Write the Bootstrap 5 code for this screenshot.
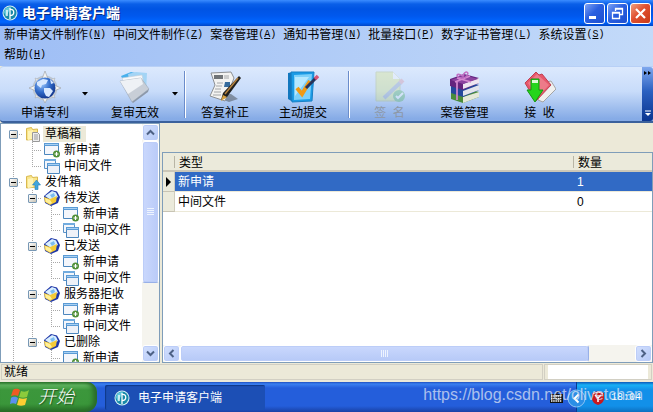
<!DOCTYPE html>
<html lang="zh-CN">
<head>
<meta charset="utf-8">
<meta name="viewport" content="width=device-width, initial-scale=1">
<title>电子申请客户端</title>
<link href="https://cdn.jsdelivr.net/npm/bootstrap@5.3.0/dist/css/bootstrap.min.css" rel="stylesheet">
<style>
body{font:12px/16px "Liberation Sans","Noto Sans CJK SC",sans-serif;color:#000;background:#ece9d8}
button{font:inherit;color:inherit;border:0;background:none;padding:0}
svg{display:block;flex:none}
.caption-bar{height:26px;background:linear-gradient(#3b8cff 0,#0a5fe8 4px,#0054e3 9px,#0058ee 16px,#0066ff 22px,#0046c8 26px);padding:0 2px}
.caption-text{font-size:14px;color:#fff;text-shadow:1px 1px #0a2a80}
.win-set{gap:2px}
.win-btn{width:21px;height:21px;border:1px solid #fff;border-radius:3px;background:linear-gradient(135deg,#7da2f5,#2a5fe0 45%,#1d4fd0)}
.win-close{background:linear-gradient(135deg,#f0a080,#e05030 45%,#c83a18)}
.menu-strip{padding:0 4px;column-gap:7px;background:linear-gradient(90deg,#9ebef5,#c3daf9)}
.menu-strip button{line-height:18px;height:20px;padding-bottom:2px;display:flex;white-space:nowrap}
.menu-strip span{font-family:"Liberation Mono",monospace;font-size:10px}
.tool-strip{height:57px;background:linear-gradient(#dce9fd,#c8dcfa 45%,#86abe6 96%);border-bottom:2px solid #3b619c;border-top:1px solid #b8d0f6;border-radius:4px 0 0 4px}
.tool-btn{width:74px;display:flex;flex-direction:column;align-items:center;padding-top:4px;gap:2px}
.tool-wide{width:75px}
.tool-btn:disabled{color:#8d97a5}
.tool-btn:disabled svg{opacity:.3}
.drop-btn{width:8px}
.tool-sep{width:2px;background:#6a8ccb;border-right:1px solid #fff;margin:4px 2px 3px 4px}
.more-btn{width:11px;background:linear-gradient(#7fa8ee,#2a60c0 45%,#0a3590);border-radius:0 3px 3px 0}
.tree-pane{width:160px;border:1px solid #7f9db9;background:#fff}
.tree-list{padding:2px 0 0 3px}
.node{height:16px;display:flex;white-space:nowrap}
.guide{width:19px;flex:none;display:flex;align-items:center;justify-content:center}
.ln,.elbow,.tee,.tip{background-repeat:no-repeat;--v:repeating-linear-gradient(#a8a8a8 0 1px,transparent 1px 2px);--h:repeating-linear-gradient(90deg,#a8a8a8 0 1px,transparent 1px 2px)}
.ln{background-image:var(--v);background-size:1px 100%;background-position:9px 0}
.tee{background-image:var(--v),var(--h);background-size:1px 100%,10px 1px;background-position:9px 0,9px 8px}
.elbow{background-image:var(--v),var(--h);background-size:1px 8px,10px 1px;background-position:9px 0,9px 8px}
.tip{background-image:var(--v),var(--h);background-size:1px 8px,10px 1px;background-position:9px 8px,9px 8px}
.fold{width:9px;height:9px;border:1px solid #7898b5;border-radius:1px;background:linear-gradient(135deg,#fff,#c9c3b4);display:flex;align-items:center;justify-content:center}
.fold::before{content:"";width:5px;height:1px;background:#000}
.cap{padding:0 2px;margin-left:1px}
.picked{background:#ece9d8;padding-right:5px}
.sb{background:#f5f4ee}
.sb-v{width:17px}
.sb-h{height:17px}
.sb-btn,.thumb{border:1px solid #fff;border-radius:3px;background:linear-gradient(135deg,#d3e0fe,#b5c9f7);box-shadow:inset 0 0 0 1px #bccdf8;display:flex;align-items:center;justify-content:center}
.sb-btn{width:17px;height:17px;flex:none}
.sb-v .thumb{height:142px;background:linear-gradient(90deg,#cad8fd,#bacbf8);border-bottom-color:#98b0e8}
.sb-h .thumb{background:linear-gradient(#cad8fd,#b6c9f7);border-right-color:#98b0e8;width:90%}
.grid-pane{border:1px solid #7f9db9;background:#fff;margin:29px 0 0 2px}
.grid-tab{width:100%;table-layout:fixed;border-collapse:separate;border-spacing:0}
.grid-tab th,.grid-tab td{height:20px;padding:0 3px;line-height:18px;border-bottom:1px solid #ece9d8;font-weight:400}
.grid-tab thead th{height:19px;background:#ebeadb;border-bottom:2px solid #cbc7b8;padding-left:4px;vertical-align:middle}
.head-cell{line-height:14px;height:12px}
.grid-tab tbody th{background:#ebeadb;border-right:1px solid #d0ccbc;border-bottom-color:#c8c4b4;padding:0 0 0 3px}
.split{border-right:1px solid #b8b5a5}
.active-row td{background:#316ac5;color:#fff}
.w-mark{width:12px}
.w-num{width:78px}
.status-strip{height:19px;border-bottom:2px solid #ece9d8;padding:1px 1px 0}
.status-cell{border:1px solid #d2cfc3;padding:0 2px}
.status-blank{width:108px;border:1px solid #d2cfc3;margin-left:1px;padding:0 3px}
.task-strip{height:30px;color:#fff;background:linear-gradient(#1f4fc0 0,#3a80f0 2px,#245edb 6px,#245edb 24px,#1941a5 30px)}
.start-btn{width:97px;padding-left:10px;font-size:18px;font-style:italic;font-weight:300;border-radius:0 10px 12px 0;background:linear-gradient(#2d7a2d 0,#5fb55f 3px,#3c973c 8px,#3a963a 22px,#256a25 30px);box-shadow:inset -4px 0 4px #2a6c2a;text-shadow:1px 1px 1px #1f4f1f}
.task-btn{width:160px;height:25px;padding:1px 0 0 9px;border-radius:2px;background:#1c4fb5;box-shadow:inset 1px 1px 1px #0f3888}
.kbd-ico{margin-right:12px}
.tray-strip{width:77px;background:linear-gradient(#0c59b9 0,#18b0f5 3px,#1290e9 8px,#1290e9 24px,#0d70c0 30px);border-left:1px solid #0a3a90;padding:2px 12px 0 0}
.tray-btn{margin-left:-10px}
.clock{font-family:"Liberation Mono",monospace;font-size:10px}
.site-note{position:absolute;right:10px;bottom:6px;font-size:16px;line-height:22px;color:rgba(225,232,245,.72);white-space:nowrap;pointer-events:none}
</style>
<script src="https://cdn.jsdelivr.net/npm/bootstrap@5.3.0/dist/js/bootstrap.bundle.min.js"></script>
</head>
<body class="vh-100 d-flex flex-column overflow-hidden">
<svg class="d-none" aria-hidden="true">
<symbol id="brand" viewBox="0 0 16 16"><circle cx="8" cy="8" r="7.5" fill="#d5f0f5"/><circle cx="8" cy="8" r="6.5" fill="#1889a8"/><path d="M2 7a6 6 0 0 1 7-5L4 12z" fill="#62c9dc"/><path d="M5 5v6M8 3v11M8 4.500c5-1 5 6 0 6" fill="none" stroke="#fff" stroke-width="1.300"/></symbol>
<symbol id="draft" viewBox="0 0 16 16"><path d="M1.500 2.500l5-1 1 2 5-.5v10l-11 1z" fill="#f9e58b" stroke="#d9b94f"/><path d="M3 5l5-1v9l-5 1z" fill="#fff4b5"/><path d="M7.500 6.500h5l2 2v7h-7z" fill="#eee" stroke="#999"/><path d="M9 9h4M9 11h4M9 13h4" stroke="#999"/></symbol>
<symbol id="outbox" viewBox="0 0 16 16"><path d="M1.500 2.500l5-1 1 2 5-.5v10l-11 1z" fill="#f9e58b" stroke="#d9b94f"/><path d="M3 5l5-1v9l-5 1z" fill="#fff4b5"/><path d="M11.500 6l4 5h-2.500v4.500h-3V11H7.500z" fill="#40a6dc" stroke="#2480b8" stroke-width=".6"/></symbol>
<symbol id="newapp" viewBox="0 0 16 16"><path d="M.5 1.500h14v11H.5z" fill="#f4f6fb" stroke="#4c86bd"/><path d="M0 1h15v3H0z" fill="#5b9bd5"/><path d="M1 2h13v1H1z" fill="#a8d0f3"/><circle cx="12.500" cy="12" r="3.500" fill="#4f8f38"/><path d="M12.500 10v4M10.500 12h4" stroke="#fff" stroke-width="1.200"/></symbol>
<symbol id="midfile" viewBox="0 0 16 16"><path d="M.5 1.500h11v9H.5z" fill="#f4f6fb" stroke="#5b93c8"/><path d="M0 1h12v2H0z" fill="#72acdf"/><path d="M3.500 5.500h12v10h-12z" fill="#eef1f8" stroke="#4c86bd"/><path d="M3 5h13v3H3z" fill="#5b9bd5"/><path d="M4 6h11v1H4z" fill="#a8d0f3"/></symbol>
<symbol id="mailbox" viewBox="0 0 16 16"><path d="M0 6l7-6 6 1.500L16 7l-2 6-7 3-6-3z" fill="#1f37a8"/><path d="M1 6l7-5 4 1.500 2 4.500-7 3z" fill="#d9efff"/><path d="M6 5l4-2 1 3-3 2z" fill="#7bbcf0"/><path d="M0 7l6 2 7-3-1 6-6 3-5-3z" fill="#f4ca37"/><path d="M1 8l5 2 2 3-2 1-4-2z" fill="#fff09a"/></symbol>
</svg>

<header class="caption-bar d-flex align-items-center flex-shrink-0">
<svg width="16" height="16"><use href="#brand"/></svg>
<h1 class="caption-text fw-bold m-0 ms-1 me-auto">电子申请客户端</h1>
<div class="win-set d-flex">
<button class="win-btn" aria-label="最小化"><svg width="19" height="19"><path d="M4 12h7v3H4z" fill="#fff"/></svg></button>
<button class="win-btn" aria-label="还原"><svg width="19" height="19"><path d="M7.500 7V4.500h7v6H12M7 5h8M4.500 8.500h7v6h-7zM4 9h8" fill="none" stroke="#fff" stroke-width="1.300"/></svg></button>
<button class="win-btn win-close" aria-label="关闭"><svg width="19" height="19"><path d="M5 5l9 9M14 5l-9 9" stroke="#fff" stroke-width="2.200"/></svg></button>
</div>
</header>

<nav class="menu-strip d-flex flex-wrap flex-shrink-0" aria-label="菜单">
<button>新申请文件制作<span>(<u>N</u>)</span></button>
<button>中间文件制作<span>(<u>Z</u>)</span></button>
<button>案卷管理<span>(<u>A</u>)</span></button>
<button>通知书管理<span>(<u>N</u>)</span></button>
<button>批量接口<span>(<u>P</u>)</span></button>
<button>数字证书管理<span>(<u>L</u>)</span></button>
<button>系统设置<span>(<u>S</u>)</span></button>
<button>帮助<span>(<u>H</u>)</span></button>
</nav>

<div class="tool-strip d-flex flex-shrink-0 ps-2" role="toolbar" aria-label="工具栏">
<button class="tool-btn"><svg width="32" height="32" viewBox="0 0 32 32"><defs><radialGradient id="gl" cx=".35" cy=".3" r=".8"><stop offset="0" stop-color="#9cc8ff"/><stop offset=".5" stop-color="#2f69c8"/><stop offset="1" stop-color="#0e2c80"/></radialGradient></defs><circle cx="16" cy="17" r="11.500" fill="none" stroke="#bcc6d2" stroke-width="2"/><path d="M16 0l3 8h-6zM16 32l3-6h-6zM0 17l7-3v6zM32 17l-7-3v6z" fill="#f4f4f2" stroke="#a2a6aa" stroke-width=".7"/><path d="M6 7l5 2-3 3zM26 7l-5 2 3 3zM6 27l5-2-3-3zM26 27l-5-2 3-3z" fill="#e8e8e8" stroke="#a2a6aa" stroke-width=".5"/><circle cx="16" cy="17" r="10.500" fill="url(#gl)"/><path d="M8 11l6-3 5 1-2 4-4 1-1 3-4-3zM15 17l6 0 3 3-4 6-3-1-2-4zM21 8l4 4-3 1z" fill="#d8e8ff"/></svg>申请专利</button>
<button class="drop-btn" aria-label="申请专利选项"><svg width="6" height="4"><path d="M0 0h6L3 3.500z"/></svg></button>
<button class="tool-btn ms-2"><svg width="32" height="32" viewBox="0 0 32 32"><path d="M2 5l10-4 14 3 1 14-14 8z" fill="#48b0ec"/><path d="M9 3l8-2 11 1-1 19-14 5z" fill="#a3d4f5"/><path d="M3 7l20-3 3 15-15 8z" fill="#f8f9fb" stroke="#c5ced8" stroke-width=".6"/><path d="M1 10l21-3 8 11-17 13z" fill="#c8ced7" stroke="#9ba6b4" stroke-width=".6"/><path d="M1 10l21-3 2 6-15 10z" fill="#eef1f5"/><path d="M13 31l17-13-1 3-15 11z" fill="#8d98a8"/></svg>复审无效</button>
<button class="drop-btn" aria-label="复审无效选项"><svg width="6" height="4"><path d="M0 0h6L3 3.500z"/></svg></button>
<i class="tool-sep"></i>
<button class="tool-btn"><svg width="32" height="32" viewBox="0 0 32 32"><path d="M2 24l18 7 9-3-7-5z" fill="#59606a" opacity=".6"/><path d="M2 2l20-1 3 6-9 23-15-5 5-11z" fill="#f3f3f1" stroke="#8d9094"/><path d="M5 4h9v4H5z" fill="#707477"/><path d="M15 5h5M15 7h5M8 12h6M7 15h6M6 18h6M5 21h7M4 24h8" stroke="#a4a6a8"/><path d="M16 11h5v5h-6z" fill="#356b9c"/><path d="M30 5l2 2-14 19-6 3 2-7z" fill="#20201f"/><path d="M29 7L16 23" stroke="#b4813d" stroke-width="1.500"/><path d="M14 24l4 2-6 4z" fill="#d9a23f"/></svg>答复补正</button>
<button class="tool-btn ms-1"><svg width="32" height="32" viewBox="0 0 32 32"><path d="M1 2l5-1v30l-5-3z" fill="#1277be"/><path d="M4 1l23 0-2 29-20 1z" fill="#1b9be6" stroke="#1780c5"/><path d="M7 4l18-1-2 25-16 1z" fill="#7cd0fa"/><path d="M8 6l14 0-14 19z" fill="#b6e8ff"/><path d="M10 17l5 6 8-13" fill="none" stroke="#f09a14" stroke-width="4"/><path d="M19 17L29 7" stroke="#25335a" stroke-width="3"/><path d="M28 8l3-3" stroke="#d65577" stroke-width="3.500"/></svg>主动提交</button>
<i class="tool-sep ms-2"></i>
<button class="tool-btn tool-wide" disabled><svg width="32" height="32" viewBox="0 0 32 32"><path d="M2 1h17l7 7v22H2z" fill="#dce76d" stroke="#aab75b"/><path d="M19 1v7h7z" fill="#fff"/><path d="M27 11L10 27" stroke="#8696b0" stroke-width="4"/><path d="M26 12l3-3" stroke="#dd8895" stroke-width="4"/><circle cx="25" cy="25" r="6" fill="#40aa45"/><path d="M22 25l2 2 5-5" fill="none" stroke="#fff" stroke-width="2"/></svg>签&nbsp; 名</button>
<button class="tool-btn tool-wide"><svg width="32" height="32" viewBox="0 0 32 32"><path d="M2 21l13-4 15 4v5L14 32 2 28z" fill="#4a8c3a"/><path d="M14 26l16-5v5l-16 6z" fill="#e4e8d8"/><path d="M2 14l13-4 15 4v5l-16 7-12-4z" fill="#24489c"/><path d="M14 20l16-6v5l-16 6z" fill="#e2e4ec"/><path d="M1 8l14-5 15 4v5l-16 7L1 15z" fill="#64247e"/><path d="M14 13l16-6v5l-16 6z" fill="#eee6f0"/><path d="M2 9l13-5 14 4-15 5z" fill="#8b439f"/><path d="M8 7l14 4M6 11l15-6M8 11v18" stroke="#d58ad1" stroke-width="1.700"/><path d="M15 7C7 8 5 0 14 5c1-6 9-5 2 2" fill="none" stroke="#c16fc4" stroke-width="1.500"/></svg>案卷管理</button>
<button class="tool-btn tool-wide me-auto"><svg width="32" height="32" viewBox="0 0 32 32"><path d="M18 12l9-2 5 8-13 13-5-2z" fill="#f0f0ef" stroke="#a4a4a4"/><path d="M1 12L12 1l3 3 3-1 9 11-15 16z" fill="#e7576b" stroke="#c04052"/><path d="M4 12l9-9 12 11-12 13z" fill="#f2929d" opacity=".6"/><path d="M7 8h8v11h4l-8 12-8-12h4z" fill="#25d51b" stroke="#149611"/><path d="M8 9h6v3H8z" fill="#d9fbd3"/></svg>接&nbsp; 收</button>
<button class="more-btn d-flex flex-column align-items-center justify-content-between py-1" aria-label="更多"><svg width="7" height="5"><path d="M0 0l3 2-3 2M4 0l3 2-3 2"/></svg><svg width="8" height="7"><path d="M1 1h6" stroke="#fff"/><path d="M1 3h6L4 6z" fill="#fff"/></svg></button>
</div>

<main class="d-flex flex-grow-1 overflow-hidden">
<aside class="tree-pane d-flex flex-shrink-0 overflow-hidden">
<ul class="tree-list list-unstyled m-0 flex-grow-1 overflow-hidden" role="tree">
<li class="node"><i class="guide tip"><button class="fold" aria-label="折叠"></button></i><i class="guide"><svg width="16" height="16"><use href="#draft"/></svg></i><span class="cap picked">草稿箱</span></li>
<li class="node"><i class="guide ln"></i><i class="guide tee"></i><i class="guide"><svg width="16" height="16"><use href="#newapp"/></svg></i><span class="cap">新申请</span></li>
<li class="node"><i class="guide ln"></i><i class="guide elbow"></i><i class="guide"><svg width="16" height="16"><use href="#midfile"/></svg></i><span class="cap">中间文件</span></li>
<li class="node"><i class="guide tee"><button class="fold" aria-label="折叠"></button></i><i class="guide"><svg width="16" height="16"><use href="#outbox"/></svg></i><span class="cap">发件箱</span></li>
<li class="node"><i class="guide ln"></i><i class="guide tee"><button class="fold" aria-label="折叠"></button></i><i class="guide"><svg width="16" height="16"><use href="#mailbox"/></svg></i><span class="cap">待发送</span></li>
<li class="node"><i class="guide ln"></i><i class="guide ln"></i><i class="guide tee"></i><i class="guide"><svg width="16" height="16"><use href="#newapp"/></svg></i><span class="cap">新申请</span></li>
<li class="node"><i class="guide ln"></i><i class="guide ln"></i><i class="guide elbow"></i><i class="guide"><svg width="16" height="16"><use href="#midfile"/></svg></i><span class="cap">中间文件</span></li>
<li class="node"><i class="guide ln"></i><i class="guide tee"><button class="fold" aria-label="折叠"></button></i><i class="guide"><svg width="16" height="16"><use href="#mailbox"/></svg></i><span class="cap">已发送</span></li>
<li class="node"><i class="guide ln"></i><i class="guide ln"></i><i class="guide tee"></i><i class="guide"><svg width="16" height="16"><use href="#newapp"/></svg></i><span class="cap">新申请</span></li>
<li class="node"><i class="guide ln"></i><i class="guide ln"></i><i class="guide elbow"></i><i class="guide"><svg width="16" height="16"><use href="#midfile"/></svg></i><span class="cap">中间文件</span></li>
<li class="node"><i class="guide ln"></i><i class="guide tee"><button class="fold" aria-label="折叠"></button></i><i class="guide"><svg width="16" height="16"><use href="#mailbox"/></svg></i><span class="cap">服务器拒收</span></li>
<li class="node"><i class="guide ln"></i><i class="guide ln"></i><i class="guide tee"></i><i class="guide"><svg width="16" height="16"><use href="#newapp"/></svg></i><span class="cap">新申请</span></li>
<li class="node"><i class="guide ln"></i><i class="guide ln"></i><i class="guide elbow"></i><i class="guide"><svg width="16" height="16"><use href="#midfile"/></svg></i><span class="cap">中间文件</span></li>
<li class="node"><i class="guide ln"></i><i class="guide elbow"><button class="fold" aria-label="折叠"></button></i><i class="guide"><svg width="16" height="16"><use href="#mailbox"/></svg></i><span class="cap">已删除</span></li>
<li class="node"><i class="guide ln"></i><i class="guide"></i><i class="guide tee"></i><i class="guide"><svg width="16" height="16"><use href="#newapp"/></svg></i><span class="cap">新申请</span></li>
</ul>
<div class="sb sb-v d-flex flex-column flex-shrink-0">
<button class="sb-btn" aria-label="向上"><svg width="9" height="7"><path d="M1 5.500L4.500 2 8 5.500" fill="none" stroke="#4d6185" stroke-width="2"/></svg></button>
<div class="thumb"><svg width="7" height="8"><path d="M0 .5h7M0 2.500h7M0 4.500h7M0 6.500h7" stroke="#eef4fe"/></svg></div>
<button class="sb-btn mt-auto" aria-label="向下"><svg width="9" height="7"><path d="M1 1.500L4.500 5 8 1.500" fill="none" stroke="#4d6185" stroke-width="2"/></svg></button>
</div>
</aside>

<section class="grid-pane d-flex flex-column flex-grow-1 overflow-hidden">
<table class="grid-tab">
<colgroup><col class="w-mark"><col><col class="w-num"></colgroup>
<thead><tr><th class="p-0"><div class="head-cell split"></div></th><th class="pe-0"><div class="head-cell split">类型</div></th><th><div class="head-cell">数量</div></th></tr></thead>
<tbody>
<tr class="active-row"><th scope="row"><svg width="6" height="10"><path d="M0 0l5 5-5 5z"/></svg></th><td>新申请</td><td>1</td></tr>
<tr><th scope="row"></th><td>中间文件</td><td>0</td></tr>
</tbody>
</table>
<div class="sb sb-h d-flex mt-auto">
<button class="sb-btn" aria-label="向左"><svg width="7" height="9"><path d="M5.500 1L2 4.500 5.500 8" fill="none" stroke="#4d6185" stroke-width="2"/></svg></button>
<div class="flex-grow-1 d-flex"><div class="thumb"><svg width="8" height="7"><path d="M.5 0v7M2.500 0v7M4.500 0v7M6.500 0v7" stroke="#eef4fe"/></svg></div></div>
<button class="sb-btn" aria-label="向右"><svg width="7" height="9"><path d="M1.500 1L5 4.500 1.500 8" fill="none" stroke="#4d6185" stroke-width="2"/></svg></button>
</div>
</section>
</main>

<div class="status-strip d-flex flex-shrink-0" role="status">
<div class="status-cell flex-grow-1 d-flex align-items-center">就绪</div>
<div class="status-blank"><div class="bg-white h-100"></div></div>
</div>

<footer class="task-strip d-flex align-items-center flex-shrink-0 position-relative">
<button class="start-btn h-100 d-flex align-items-center gap-2">
<svg width="20" height="20" viewBox="0 0 20 20"><path d="M3 3c3-2 5-1 7 0L8 9C6 8 4 8 1 9z" fill="#ee5a24"/><path d="M11 4c3 1 5 1 8-1l-2 7c-3 1-5 1-8 0z" fill="#8ccb3c"/><path d="M1 11c3-2 5-1 7 0l-2 6c-2-1-4-1-6 0z" fill="#5b90f0"/><path d="M9 11c3 1 5 1 8 0l-2 7c-3 1-5 1-8 0z" fill="#fbce32"/></svg>开始</button>
<button class="task-btn d-flex align-items-center gap-2 ms-2 me-auto"><svg width="16" height="16"><use href="#brand"/></svg>电子申请客户端</button>
<svg class="kbd-ico" width="14" height="12" role="img" aria-label="键盘"><path d="M7 3V1h4" fill="none" stroke="#111"/><path d="M0 3h13v9H0z" fill="#111"/><path d="M1 5h11M1 7.500h11M1 10h11" stroke="#fff" stroke-width="1.500" stroke-dasharray="1.500 .7"/></svg>
<div class="tray-strip h-100 d-flex align-items-center justify-content-between">
<button class="tray-btn" aria-label="展开"><svg width="19" height="19"><circle cx="9.500" cy="9.500" r="8.500" fill="#2b8fe6" stroke="#8cc4f5"/><path d="M11.500 5.500l-4 4 4 4" fill="none" stroke="#fff" stroke-width="2"/></svg></button>
<svg width="12" height="14" role="img" aria-label="安全"><path d="M6 0l6 2v5c0 4-3 6-6 7-3-1-6-3-6-7V2z" fill="#c8191f"/><path d="M1 2.500L6 1l5 1.500" fill="none" stroke="#eee"/><path d="M3 4l3 3 3-3M6 7v4" fill="none" stroke="#fff" stroke-width="1.500"/></svg>
<time class="clock">18:04</time>
</div>
<div class="site-note">https://blog.csdn.net/olivetchan</div>
</footer>
</body>
</html>
